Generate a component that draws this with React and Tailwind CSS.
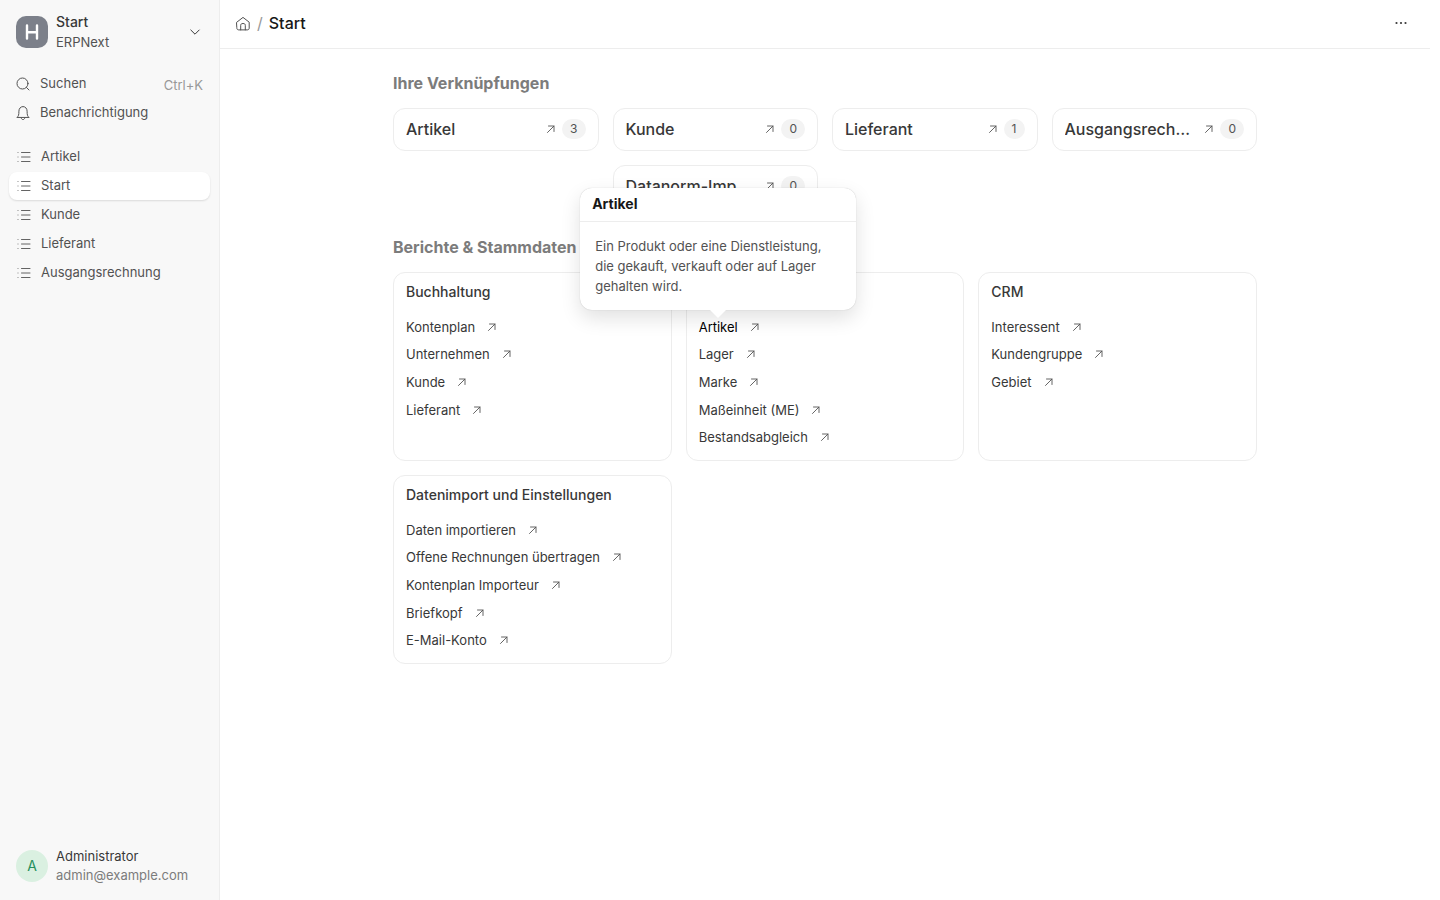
import React from "react";

const sidebarLinks = ["Artikel", "Start", "Kunde", "Lieferant", "Ausgangsrechnung"];

const shortcuts = [
  { label: "Artikel", count: 3 },
  { label: "Kunde", count: 0 },
  { label: "Lieferant", count: 1 },
  { label: "Ausgangsrechnung", count: 0 },
  { label: "Datanorm-Import", count: 0, className: "col-start-2" },
];

const reports = [
  { title: "Buchhaltung", links: ["Kontenplan", "Unternehmen", "Kunde", "Lieferant"] },
  {
    title: "",
    links: ["Artikel", "Lager", "Marke", "Maßeinheit (ME)", "Bestandsabgleich"],
    openLink: "Artikel",
  },
  { title: "CRM", links: ["Interessent", "Kundengruppe", "Gebiet"] },
  {
    title: "Datenimport und Einstellungen",
    links: [
      "Daten importieren",
      "Offene Rechnungen übertragen",
      "Kontenplan Importeur",
      "Briefkopf",
      "E-Mail-Konto",
    ],
  },
];

function Icon({ size = 16, children, className = "" }) {
  return (
    <svg
      width={size}
      height={size}
      viewBox={`0 0 ${size} ${size}`}
      fill="none"
      stroke="currentColor"
      strokeLinecap="round"
      strokeLinejoin="round"
      className={`shrink-0 ${className}`}
      aria-hidden="true"
    >
      {children}
    </svg>
  );
}

function ArrowIcon() {
  return (
    <Icon size={12} className="text-[#525252]">
      <path d="M2.5 9.5 9 3M3.5 3H9V8.5" strokeWidth="0.9" />
    </Icon>
  );
}

function ListIcon() {
  return (
    <Icon className="text-[#525252]">
      <path d="M4.5 3.5H13M4.5 8H13M4.5 12.5H13" strokeWidth="0.9" />
      <path d="M0.7 3.5H1.3M0.7 8H1.3M0.7 12.5H1.3" strokeWidth="0.8" opacity="0.6" />
    </Icon>
  );
}

function Sidebar() {
  return (
    <aside className="flex w-[220px] shrink-0 flex-col border-r border-[#ededed] bg-[#f8f8f8] text-[13px] text-[#525252]">
      <button className="flex items-center gap-2 px-4 pt-3 text-left">
        <span className="flex size-8 items-center justify-center rounded-[10px] bg-[#7c808a] text-white">
          <Icon size={18}>
            <path d="M4 2.5V15.5M14 2.5V15.5M4 9.2H14" strokeWidth="2.4" />
          </Icon>
        </span>
        <span className="flex flex-1 flex-col leading-5">
          <span className="text-sm leading-5 font-medium text-[#383838]">Start</span>
          <span>ERPNext</span>
        </span>
        <Icon className="text-[#383838]">
          <path d="M3.8 6 8 10.2 12.2 6" strokeWidth="1" />
        </Icon>
      </button>

      <div className="mt-[18px] flex flex-col gap-px px-2">
        <button className="flex h-7 items-center gap-2 px-2 text-left">
          <Icon>
            <circle cx="6.5" cy="7.5" r="5.5" />
            <path d="M10.5 11.5 13 14" />
          </Icon>
          <span className="flex-1">Suchen</span>
          <span className="pt-1 text-[#999999]">Ctrl+K</span>
        </button>
        <button className="flex h-7 items-center gap-2 px-2 text-left">
          <Icon>
            <path d="M1.2 12.2C2.6 11.1 2.9 9.9 2.9 6.2 2.9 3.6 4.6 1.6 7 1.6S11.1 3.6 11.1 6.2C11.1 9.9 11.4 11.1 12.8 12.2ZM5.3 13.3C5.6 14.1 6.3 14.6 7 14.6S8.4 14.1 8.7 13.3" />
          </Icon>
          Benachrichtigung
        </button>
      </div>

      <nav className="mt-4 flex flex-col gap-px px-[9px]">
        {sidebarLinks.map((label) => (
          <a
            key={label}
            href="#"
            className={`flex h-7 items-center gap-2 rounded-lg px-2 ${
              label === "Start" ? "bg-white shadow-[0_1px_2px_rgba(0,0,0,0.12)]" : ""
            }`}
          >
            <ListIcon />
            {label}
          </a>
        ))}
      </nav>

      <button className="mt-auto flex items-center gap-2 px-4 pb-[15px] text-left">
        <span className="flex size-8 items-center justify-center rounded-full bg-[#daf0e1] text-sm text-[#278f5e]">
          A
        </span>
        <span className="flex flex-col leading-[19px]">
          <span className="text-[#383838]">Administrator</span>
          <span className="text-[#7c7c7c]">admin@example.com</span>
        </span>
      </button>
    </aside>
  );
}

function Header() {
  return (
    <header className="flex h-[49px] items-center border-b border-[#ededed] px-[15px] pb-[2px]">
      <a href="#" aria-label="Start" className="text-[#525252]">
        <Icon>
          <path d="M1.8 7.2 8 2.4 14.2 7.2V13C14.2 14.2 13.5 14.9 12.3 14.9H3.7C2.5 14.9 1.8 14.2 1.8 13ZM5.7 14.9V10.3C5.7 9.1 6.5 8.5 8 8.5S10.3 9.1 10.3 10.3V14.9" />
        </Icon>
      </a>
      <span className="px-[6px] text-base text-[#999999]">/</span>
      <h1 className="text-base font-medium text-[#171717]">Start</h1>
      <button aria-label="Menü" className="ml-auto flex size-7 items-center justify-center text-[#383838]">
        <Icon>
          <g fill="currentColor" stroke="none">
            <circle cx="3.5" cy="8" r="1.1" />
            <circle cx="8" cy="8" r="1.1" />
            <circle cx="12.5" cy="8" r="1.1" />
          </g>
        </Icon>
      </button>
    </header>
  );
}

function Shortcut({ label, count, className = "" }) {
  return (
    <a
      href="#"
      className={`flex h-[43px] items-center rounded-xl border border-[#ededed] px-3 pb-px ${className}`}
    >
      <span className="mr-3 min-w-0 flex-1 truncate text-base font-medium text-[#383838]">
        {label}
      </span>
      <ArrowIcon />
      <span className="ml-[5px] h-5 rounded-full bg-[#f3f3f3] px-2 text-xs leading-5 text-[#525252]">
        {count}
      </span>
    </a>
  );
}

function Popover() {
  return (
    <div className="absolute bottom-full left-1/2 z-10 mb-[7px] w-[276px] -translate-x-1/2 rounded-xl bg-white shadow-[0_0_1px_rgba(0,0,0,0.25),0_8px_20px_rgba(0,0,0,0.12)]">
      <h3 className="border-b border-[#ededed] px-3 pt-[6px] pb-[7px] text-sm font-bold text-[#171717]">
        Artikel
      </h3>
      <p className="px-[15px] py-[14px] leading-5 text-[#525252]">
        Ein Produkt oder eine Dienstleistung, die gekauft, verkauft oder auf Lager gehalten wird.
      </p>
      <svg
        width="16"
        height="8"
        viewBox="0 0 16 8"
        className="absolute top-full left-1/2 -translate-x-1/2"
        aria-hidden="true"
      >
        <path d="M0 0H16L8 8Z" fill="#ffffff" />
      </svg>
    </div>
  );
}

function ReportCard({ title, links, openLink }) {
  return (
    <section className="rounded-xl border border-[#ededed] px-3 py-[9px]">
      <h3 className="h-5 text-sm leading-5 font-medium text-[#383838]">{title}</h3>
      <ul className="mt-[11px] grid h-[138px] grid-rows-5 text-[13px] leading-5 text-[#383838]">
        {links.map((link) => (
          <li key={link} className="flex items-center gap-[11px]">
            <span className="relative">
              <a href="#" className={link === openLink ? "text-black" : ""}>
                {link}
              </a>
              {link === openLink && <Popover />}
            </span>
            <ArrowIcon />
          </li>
        ))}
      </ul>
    </section>
  );
}

export default function App() {
  return (
    <div className="flex min-h-screen bg-white font-['Inter',sans-serif]">
      <Sidebar />
      <div className="min-w-0 flex-1 pr-[10px]">
        <Header />
        <main className="mx-auto max-w-[864px] pt-[22px]">
          <h2 className="text-base font-bold text-[#7c7c7c]">Ihre Verknüpfungen</h2>
          <div className="mt-[13px] grid grid-cols-4 gap-[14px]">
            {shortcuts.map((item) => (
              <Shortcut key={item.label} {...item} />
            ))}
          </div>
          <h2 className="mt-[27px] text-base font-bold text-[#7c7c7c]">Berichte &amp; Stammdaten</h2>
          <div className="mt-[13px] grid grid-cols-3 gap-[14px]">
            {reports.map((report) => (
              <ReportCard key={report.links[0]} {...report} />
            ))}
          </div>
        </main>
      </div>
    </div>
  );
}
